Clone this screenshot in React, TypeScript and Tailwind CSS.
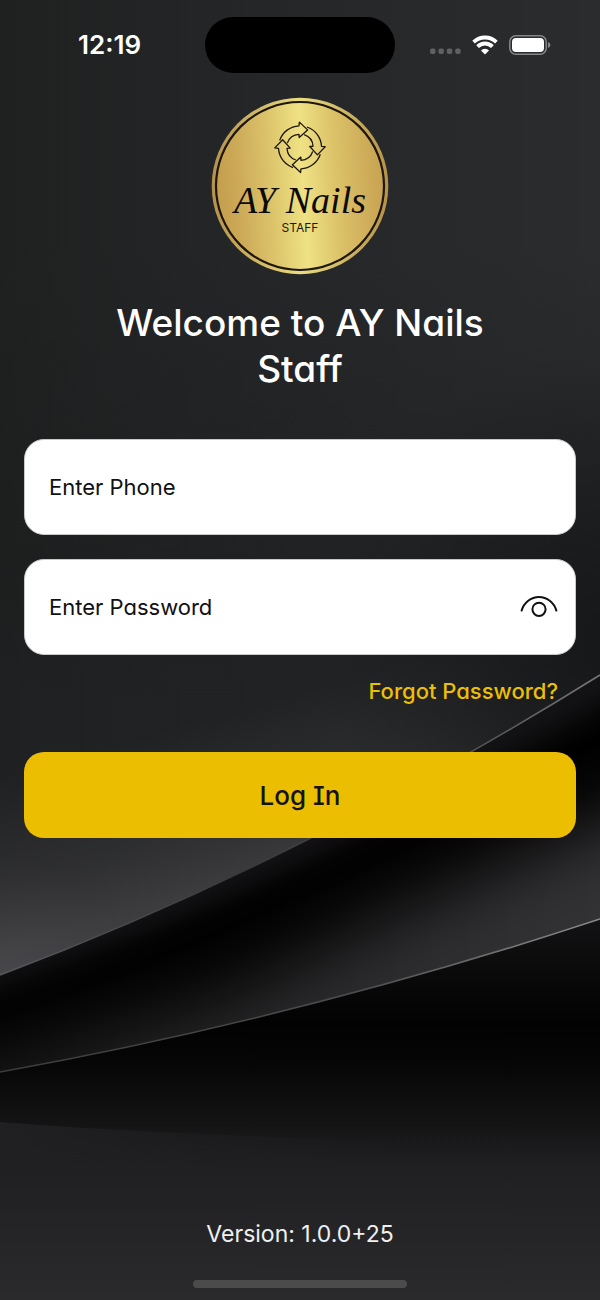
import { useState } from "react";

function Backdrop() {
  return (
    <svg
      className="absolute inset-0 -z-10 h-full w-full"
      viewBox="0 0 600 1300"
      preserveAspectRatio="none"
      aria-hidden="true"
    >
      <defs>
        <linearGradient id="base" x1="0" y1="0" x2="600" y2="0" gradientUnits="userSpaceOnUse">
          <stop offset="0" stopColor="#1f2120" />
          <stop offset="0.35" stopColor="#242527" />
          <stop offset="1" stopColor="#2b2c2e" />
        </linearGradient>
        <linearGradient id="shade" x1="0" y1="250" x2="0" y2="700" gradientUnits="userSpaceOnUse">
          <stop offset="0" stopColor="#1b1d1e" stopOpacity="0" />
          <stop offset="0.7" stopColor="#1b1d1e" stopOpacity="0.55" />
          <stop offset="1" stopColor="#1f2022" stopOpacity="0.7" />
        </linearGradient>
        <linearGradient id="glow" x1="100" y1="750" x2="160" y2="960" gradientUnits="userSpaceOnUse">
          <stop offset="0" stopColor="#3a3a3c" stopOpacity="0" />
          <stop offset="0.45" stopColor="#363638" stopOpacity="0.6" />
          <stop offset="0.75" stopColor="#3c3c3f" />
          <stop offset="1" stopColor="#444448" />
        </linearGradient>
        <radialGradient id="corner" cx="0" cy="985" r="130" gradientUnits="userSpaceOnUse">
          <stop offset="0" stopColor="#56565a" stopOpacity="0.4" />
          <stop offset="1" stopColor="#4c4c50" stopOpacity="0" />
        </radialGradient>
        <radialGradient id="dusk" cx="620" cy="650" r="300" gradientUnits="userSpaceOnUse">
          <stop offset="0" stopColor="#151618" />
          <stop offset="0.4" stopColor="#191a1c" stopOpacity="0.8" />
          <stop offset="1" stopColor="#1c1d1f" stopOpacity="0" />
        </radialGradient>
        <linearGradient id="floor" x1="0" y1="920" x2="0" y2="1300" gradientUnits="userSpaceOnUse">
          <stop offset="0" stopColor="#121214" />
          <stop offset="0.27" stopColor="#020202" />
          <stop offset="0.38" stopColor="#060606" />
          <stop offset="0.53" stopColor="#131314" />
          <stop offset="0.6" stopColor="#1b1b1d" />
          <stop offset="0.66" stopColor="#202022" />
          <stop offset="1" stopColor="#2a2a2c" />
        </linearGradient>
        <linearGradient id="ledge" x1="0" y1="0" x2="400" y2="0" gradientUnits="userSpaceOnUse">
          <stop offset="0" stopColor="#202022" />
          <stop offset="1" stopColor="#202022" stopOpacity="0" />
        </linearGradient>
        <linearGradient id="sheen" x1="0" y1="0" x2="600" y2="0" gradientUnits="userSpaceOnUse">
          <stop offset="0" stopColor="#1c1c1d" />
          <stop offset="0.5" stopColor="#2a2a2c" />
          <stop offset="1" stopColor="#323235" />
        </linearGradient>
        <linearGradient id="rimTop" x1="0" y1="0" x2="600" y2="0" gradientUnits="userSpaceOnUse">
          <stop offset="0" stopColor="#58585c" />
          <stop offset="0.4" stopColor="#3a3a3c" />
          <stop offset="0.75" stopColor="#4a4a4c" />
          <stop offset="1" stopColor="#77757a" />
        </linearGradient>
        <linearGradient id="rimLow" x1="0" y1="0" x2="600" y2="0" gradientUnits="userSpaceOnUse">
          <stop offset="0" stopColor="#3c3c3c" />
          <stop offset="0.6" stopColor="#4c4c4e" />
          <stop offset="1" stopColor="#8c8a88" />
        </linearGradient>
        <filter id="haze" x="-20%" y="-40%" width="140%" height="180%" colorInterpolationFilters="sRGB">
          <feGaussianBlur stdDeviation="16" />
        </filter>
        <filter id="soft" x="-20%" y="-40%" width="140%" height="180%" colorInterpolationFilters="sRGB">
          <feGaussianBlur stdDeviation="34" />
        </filter>
        <clipPath id="fold">
          <path d="M0 975Q300 862 600 675V919Q300 1018 0 1072Z" />
        </clipPath>
      </defs>
      <path d="M0 0H600V1300H0Z" fill="url(#base)" />
      <path d="M0 250H600V980H0Z" fill="url(#shade)" />
      <path d="M0 600H600V980H0Z" fill="url(#glow)" />
      <path d="M0 840H200V980H0Z" fill="url(#corner)" />
      <path d="M300 340H600V960H300Z" fill="url(#dusk)" />
      <path d="M0 975Q300 862 600 675V1300H0Z" fill="#020202" />
      <g clipPath="url(#fold)">
        <path d="M-50 980Q300 862 650 650" fill="none" stroke="#18181b" strokeWidth="36" filter="url(#haze)" />
        <path d="M-80 1085L230 995L400 910L700 780V1060L300 1150L-80 1220Z" fill="url(#sheen)" filter="url(#soft)" />
      </g>
      <path d="M0 1072Q300 1018 600 919V1300H0Z" fill="url(#floor)" />
      <path d="M0 1122Q120 1132 400 1142V1171H0Z" fill="url(#ledge)" />
      <path d="M0 975Q300 862 600 675" fill="none" stroke="url(#rimTop)" strokeWidth="1.6" />
      <path d="M0 1072Q300 1018 600 919" fill="none" stroke="url(#rimLow)" strokeWidth="1.6" />
    </svg>
  );
}

function WifiIcon() {
  return (
    <svg width="26" height="20" viewBox="0 0 26 20" fill="none" stroke="#fff" strokeWidth="3.8" aria-hidden="true">
      <path d="M1.6 7.2A16.2 16.2 0 0 1 24.4 7.2" />
      <path d="M5.6 11.6A10.4 10.4 0 0 1 20.4 11.6" />
      <path d="M13 19.4L9 15.4A5.6 5.6 0 0 1 17 15.4Z" fill="#fff" stroke="none" />
    </svg>
  );
}

function BatteryIcon() {
  return (
    <svg width="42" height="20" viewBox="0 0 42 20" aria-hidden="true">
      <rect x="0.8" y="0.8" width="36.4" height="18.4" rx="6" fill="none" stroke="#858688" strokeWidth="1.5" />
      <rect x="3" y="3" width="32" height="14" rx="4" fill="#fff" />
      <path d="M39 7Q41.4 8 41.4 10T39 13Z" fill="#858688" />
    </svg>
  );
}

function StatusBar() {
  return (
    <header className="grid grid-cols-[1fr_190px_1fr] items-center pt-[17px]">
      <div className="pl-[14px] text-center text-[26px] leading-8 font-semibold">12:19</div>
      <div className="h-14 rounded-full bg-black" />
      <div className="flex items-center justify-center gap-[11px] pr-[15px]">
        <svg width="31" height="20" viewBox="0 0 31 20" fill="#606163" aria-hidden="true">
          <rect x="0" y="13.6" width="5.5" height="5.5" rx="2" />
          <rect x="8.4" y="13.6" width="5.5" height="5.5" rx="2" />
          <rect x="16.8" y="13.6" width="5.5" height="5.5" rx="2" />
          <rect x="25.2" y="13.6" width="5.5" height="5.5" rx="2" />
        </svg>
        <WifiIcon />
        <BatteryIcon />
      </div>
    </header>
  );
}

const ARROW =
  "M-20.3-6.9A21.5 21.5 0 0 1-1-21.5L-.6-25.2L7.6-17.4L-.8-9.8L-1-13A13 13 0 0 0-12.7-4.2";

function Logo() {
  return (
    <svg width="178" height="178" viewBox="-89 -89 178 178" role="img" aria-label="AY Nails Staff">
      <defs>
        <linearGradient id="gold" x1="0" y1="0.03" x2="1" y2="-0.03">
          <stop offset="0" stopColor="#c4a04f" />
          <stop offset="0.1" stopColor="#cca957" />
          <stop offset="0.3" stopColor="#dcc46b" />
          <stop offset="0.49" stopColor="#efe284" />
          <stop offset="0.68" stopColor="#dcc369" />
          <stop offset="0.9" stopColor="#cca957" />
          <stop offset="1" stopColor="#c4a04f" />
        </linearGradient>
        <linearGradient id="ring" x1="0" y1="0" x2="1" y2="0">
          <stop offset="0" stopColor="#b5924c" />
          <stop offset="0.5" stopColor="#eadb80" />
          <stop offset="1" stopColor="#b5924c" />
        </linearGradient>
      </defs>
      <circle r="88.3" fill="url(#ring)" />
      <circle r="84" fill="url(#gold)" stroke="#1d1609" strokeWidth="2.2" />
      <g transform="translate(0 -38.7)" fill="none" stroke="#1d1609" strokeWidth="1.3" strokeLinejoin="round">
        <path d={ARROW} />
        <path d={ARROW} transform="rotate(90)" />
        <path d={ARROW} transform="rotate(180)" />
        <path d={ARROW} transform="rotate(270)" />
      </g>
      <text
        y="27"
        textAnchor="middle"
        fill="#0d0a05"
        className="font-['Liberation_Serif',cursive] text-[38px] italic"
      >
        AY Nails
      </text>
      <text y="46" textAnchor="middle" fill="#1d1609" className="font-[Inter,sans-serif] text-[12px]">
        STAFF
      </text>
    </svg>
  );
}

const FIELD =
  "h-24 w-full rounded-[20px] border border-[#c9c9c9] bg-white px-6 text-[22px] text-[#111] outline-none placeholder:text-[#111] placeholder:opacity-100";

export default function App() {
  const [visible, setVisible] = useState(false);
  return (
    <div className="relative isolate flex min-h-screen flex-col font-[Inter,sans-serif] text-white">
      <Backdrop />
      <StatusBar />
      <main className="flex grow flex-col px-6 pt-6 [font-feature-settings:'cv11','cv08']">
        <div className="flex justify-center">
          <Logo />
        </div>
        <h1 className="mx-auto mt-[25px] max-w-[400px] text-center text-[37px] leading-[46px] font-medium">
          Welcome to AY Nails Staff
        </h1>
        <form className="mt-[47px] flex flex-col" onSubmit={(e) => e.preventDefault()}>
          <input type="tel" aria-label="Phone" placeholder="Enter Phone" className={FIELD} />
          <div className="relative mt-6">
            <input
              type={visible ? "text" : "password"}
              aria-label="Password"
              placeholder="Enter Password"
              className={FIELD}
            />
            <button
              type="button"
              aria-label="Show password"
              onClick={() => setVisible(!visible)}
              className="absolute inset-y-0 right-[17px] flex items-center"
            >
              <svg width="40" height="24" viewBox="0 0 40 24" fill="none" stroke="#111" strokeWidth="2" strokeLinecap="round" aria-hidden="true">
                <path d="M2.6 15.6C5 7.5 12 2 20 2S35 7.5 37.4 15.6" />
                <circle cx="20" cy="14.3" r="6.6" />
              </svg>
            </button>
          </div>
          <a href="#forgot" className="mt-5 mr-[18px] self-end text-[22px] leading-8 font-medium text-[#ecbf05]">
            Forgot Password?
          </a>
          <button
            type="submit"
            className="mt-[45px] h-[86px] rounded-[20px] bg-[#ecbe02] text-[26px] font-medium text-[#15120a]"
          >
            Log In
          </button>
        </form>
      </main>
      <footer className="flex flex-col items-center gap-[30px] pb-3">
        <p className="text-[23px] leading-8 text-[#f0f0f0]">Version: 1.0.0+25</p>
        <div className="h-2 w-[214px] rounded-full bg-[#4b4b4c]" />
      </footer>
    </div>
  );
}
